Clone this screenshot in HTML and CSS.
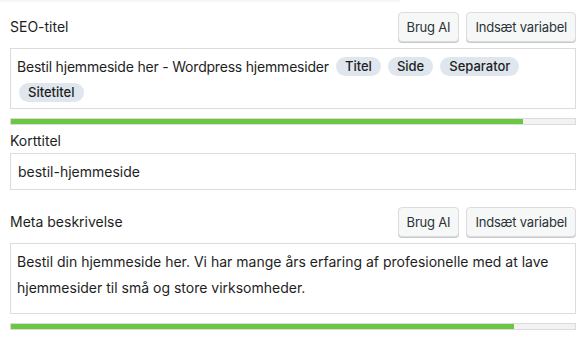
FILE: index.html
```html
<!DOCTYPE html>
<html lang="da">
<head>
    <meta charset="UTF-8">
    <title>SEO</title>
    <link rel="stylesheet" href="styles.css">
</head>
<body>
<div class="topshade"></div>
<div class="panel">
    <div class="row">
        <label class="label">SEO-titel</label>
        <div class="btns">
            <button class="btn">Brug AI</button>
            <button class="btn">Indsæt variabel</button>
        </div>
    </div>
    <div class="box tags">
        <span class="txt">Bestil hjemmeside her - Wordpress hjemmesider</span>
        <span class="pill">Titel</span>
        <span class="pill">Side</span>
        <span class="pill">Separator</span>
        <span class="pill first">Sitetitel</span>
    </div>
    <div class="bar"><div class="fill" style="width: 90.8%"></div></div>

    <label class="label single">Korttitel</label>
    <div class="box input">bestil-hjemmeside</div>

    <div class="row meta">
        <label class="label">Meta beskrivelse</label>
        <div class="btns">
            <button class="btn">Brug AI</button>
            <button class="btn">Indsæt variabel</button>
        </div>
    </div>
    <div class="box area">Bestil din hjemmeside her. Vi har mange års erfaring af profesionelle med at lave hjemmesider til små og store virksomheder.</div>
    <div class="bar"><div class="fill" style="width: 89.2%"></div></div>
</div>
</body>
</html>
```

FILE: styles.css
```css
* {
    margin: 0;
    padding: 0;
    box-sizing: border-box;
}

body {
    background: #fff;
    font-family: Inter, "Noto Sans", sans-serif;
    color: #1e1e1e;
    font-size: 14px;
}

.topshade {
    width: 400px;
    height: 3px;
    background: linear-gradient(#f3f3f3, #fff);
}

.panel {
    width: 566px;
    margin: 9px 0 0 10px;
}

.row {
    display: flex;
    justify-content: space-between;
    align-items: center;
    height: 30px;
    margin-bottom: 6px;
}

.label {
    display: block;
    font-size: 14px;
    line-height: 20px;
}

.btns {
    display: flex;
    gap: 7px;
}

.btn {
    height: 30px;
    padding: 0 8px;
    font-family: inherit;
    font-size: 13px;
    letter-spacing: -0.2px;
    color: #2c3338;
    background: #f6f7f7;
    border: 1px solid #dcdcde;
    border-radius: 4px;
    box-shadow: 0 1px 0 #c9c9cc;
}

.box {
    border: 1px solid #dcdcde;
    background: #fff;
}

.tags {
    display: flex;
    flex-wrap: wrap;
    align-items: center;
    gap: 7px 7px;
    padding: 8px 8px 6px 6px;
    min-height: 61px;
}

.txt {
    line-height: 19px;
    letter-spacing: -0.2px;
}

.pill {
    height: 19px;
    line-height: 19px;
    padding: 0 9px;
    font-size: 13px;
    font-weight: 500;
    background: #dfe6ee;
    border-radius: 10px;
}

.pill.first {
    margin-left: 2px;
}

.bar {
    height: 7px;
    margin-top: 9px;
    border: 1px solid #dcdcde;
    background: #f2f2f2;
}

.fill {
    height: 100%;
    background: #6bc742;
}

.single {
    margin: 6px 0 2px;
}

.input {
    height: 37px;
    line-height: 35px;
    padding: 0 7px;
}

.meta {
    height: 31px;
    margin-top: 16px;
}

.area {
    height: 71px;
    padding: 5px 6px;
    line-height: 26px;
}
```
